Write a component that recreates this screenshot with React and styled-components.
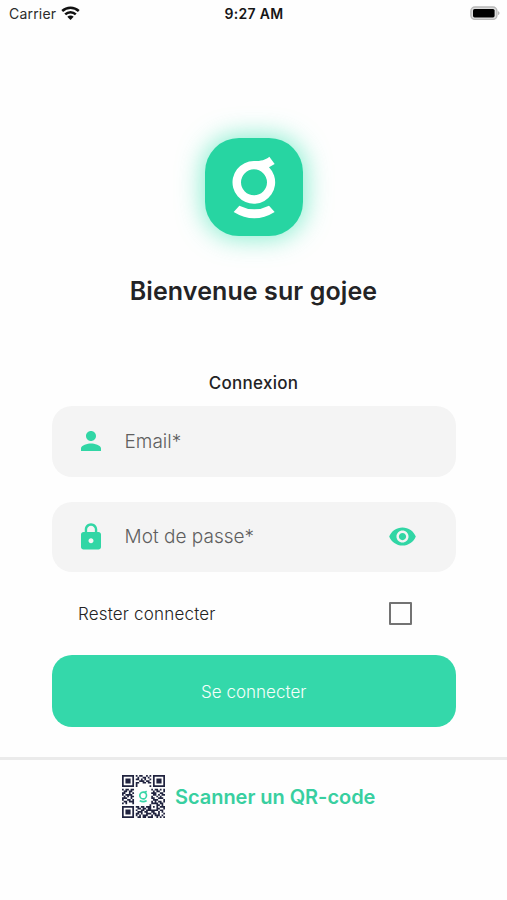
import React, { useState } from "react";
import styled, { createGlobalStyle } from "styled-components";

const GlobalStyle = createGlobalStyle`
  * { box-sizing: border-box; }
  body { margin: 0; background: #fefefe; font-family: Inter, "Liberation Sans", sans-serif; }
`;

const Screen = styled.main`
  width: 507px;
  height: 900px;
  overflow: hidden;
  display: flex;
  flex-direction: column;
  background: #fefefe;
  color: #232325;
`;

const StatusBar = styled.header`
  display: grid;
  grid-template-columns: 1fr auto 1fr;
  align-items: center;
  height: 27px;
  padding: 0 7px 0 9px;
  flex: none;
`;

const Carrier = styled.div`
  display: flex;
  align-items: center;
  gap: 5px;
  font-size: 14px;
  letter-spacing: 0.2px;
  color: #2c2c2c;
`;

const Clock = styled.div`
  font-size: 14px;
  font-weight: 600;
  letter-spacing: 0.3px;
  margin-right: 1px;
  color: #161616;
`;

const BatterySlot = styled.div`
  display: flex;
  justify-content: flex-end;
`;

const Tile = styled.div`
  width: 98px;
  height: 98px;
  margin: 111px 0 0 205px;
  flex: none;
  border-radius: 34px;
  background: #27d5a2;
  box-shadow: 0 0 24px 3px rgba(60, 228, 178, 0.6);
  svg { display: block; }
`;

const Title = styled.h1`
  margin: 37px 0 0;
  height: 36px;
  line-height: 36px;
  text-align: center;
  font-size: 25px;
  font-weight: 600;
  letter-spacing: ${(p) => p.$track}px;
`;

const Subtitle = styled.h2`
  margin: 62px 0 0;
  height: 24px;
  line-height: 24px;
  text-align: center;
  font-size: 17px;
  font-weight: 500;
  letter-spacing: ${(p) => p.$track}px;
`;

const Form = styled.form`
  width: 404.5px;
  margin: 11px 0 0 51.5px;
  display: flex;
  flex-direction: column;
`;

const Field = styled.label`
  display: flex;
  align-items: center;
  height: 70.5px;
  margin-bottom: 25px;
  padding: 0 39.5px 0 24px;
  border-radius: 20px;
  background: #f4f4f4;
  color: #31d6a5;
`;

const Input = styled.input`
  flex: 1;
  min-width: 0;
  height: 40px;
  margin-left: 19px;
  padding: 0;
  border: 0;
  outline: 0;
  background: none;
  font: 300 19px Inter, sans-serif;
  letter-spacing: ${(p) => p.$track}px;
  color: #333;
  &::placeholder { color: #5f5f5f; opacity: 1; }
`;

const IconButton = styled.button`
  display: flex;
  padding: 0;
  border: 0;
  background: none;
  color: inherit;
`;

const Remember = styled.label`
  display: flex;
  align-items: center;
  justify-content: space-between;
  height: 57px;
  padding: 0 40.5px 0 26.5px;
  margin-top: -12px;
  font-size: 17px;
  font-weight: 300;
  letter-spacing: ${(p) => p.$track}px;
  color: #242424;
`;

const Checkbox = styled.input`
  appearance: none;
  width: 23px;
  height: 23px;
  margin: 0 4px 0 0;
  border: 2px solid #737373;
  border-radius: 1px;
  &:checked { background: #31d6a5; }
`;

const Submit = styled.button`
  height: 72px;
  margin-top: 13px;
  padding-top: 2px;
  border: 0;
  border-radius: 20px;
  background: #34d8aa;
  color: #f4fffb;
  font: 300 17px Inter, sans-serif;
  letter-spacing: ${(p) => p.$track}px;
`;

const Footer = styled.footer`
  margin-top: 30px;
  padding: 15px 0 0 122px;
  border-top: 3px solid #ebebeb;
  display: flex;
  align-items: center;
  gap: 10px;
`;

const ScanLink = styled.span`
  padding-top: 1px;
  font-size: 20px;
  font-weight: 600;
  letter-spacing: ${(p) => p.$track}px;
  color: #38cfa0;
  white-space: nowrap;
`;

function Wifi() {
  return (
    <svg width="19" height="15" viewBox="0 0 19 15" fill="none" stroke="#111" strokeWidth="2.5">
      <path d="M1.2 5C5.9.6 13.1.6 17.8 5M4.2 8.3c3-2.9 7.6-2.9 10.6 0" />
      <path d="M6.3 10.7c1.8-1.6 4.6-1.6 6.4 0l-3.2 3.2z" fill="#111" stroke="none" />
    </svg>
  );
}

function Battery() {
  return (
    <svg width="30" height="15" viewBox="0 0 30 15">
      <rect x=".9" y="1" width="26" height="12.4" rx="4" fill="#ddd" stroke="#b8b8b8" strokeWidth="1.4" />
      <rect x="3" y="3" width="21.6" height="8.4" rx="1.6" fill="#000" />
      <path d="M28 5.3c2 .5 2 3.3 0 3.8z" fill="#b5b5b5" />
    </svg>
  );
}

const GMark = ({ fill = "#fff" }) => (
  <g fill={fill}>
    <path fillRule="evenodd" d="M237 168c22 0 34-3 46-13l16 22-17 10a64 64 0 1 1-45-19zm0 25a39 39 0 1 0 0 78 39 39 0 0 0 0-78z" />
    <path d="M193 302q45 22 89 0l17 19q-61 38-123 0z" />
  </g>
);

const Logo = () => (
  <svg width="98" height="98" viewBox="90 99 294 294"><GMark /></svg>
);

const QR_ROWS = [
  "1111111010110010101111111",
  "1000001001001101001000001",
  "1011101011010100101011101",
  "1011101000111011001011101",
  "1011101011001101101011101",
  "1000001010000000001000001",
  "1111111010000000101111111",
  "0000000000000000000000000",
  "1011011000000000010110101",
  "0110110000000000001011001",
  "1100101000000000011100110",
  "1011110000000000001101011",
  "0101011000000000010010100",
  "1110010000000000011001110",
  "1001101000000000001110001",
  "0110111000000000010101101",
  "1010001000000000011110110",
  "0000000000000000100011010",
  "1111111011011011101010111",
  "1000001001101101100011001",
  "1011101010011011111110110",
  "1011101001110110011001010",
  "1011101011010011101101001",
  "1000001010101110010111010",
  "1111111001101101110010101",
];

function QrCode() {
  const d = QR_ROWS.flatMap((row, y) =>
    [...row].map((cell, x) => (cell === "1" ? `M${x} ${y}h1v1h-1z` : ""))
  ).join("");
  return (
    <svg width="43" height="43" viewBox="0 0 25 25">
      <path d={d} fill="#20233f" />
      <g transform="translate(3.3 3.1) scale(.038)"><GMark fill="#38d6a7" /></g>
    </svg>
  );
}

const Icon = ({ size = 28, d }) => (
  <svg width={size} height={size} viewBox="0 0 24 24" fill="currentColor"><path d={d} /></svg>
);

const PERSON = "M12 12c2.21 0 4-1.79 4-4s-1.79-4-4-4-4 1.79-4 4 1.79 4 4 4zm0 2c-2.67 0-8 1.34-8 4v2h16v-2c0-2.66-5.33-4-8-4z";
const LOCK = "M18 8h-1V6c0-2.76-2.24-5-5-5S7 3.24 7 6v2H6c-1.1 0-2 .9-2 2v10c0 1.1.9 2 2 2h12c1.1 0 2-.9 2-2V10c0-1.1-.9-2-2-2zm-6 9c-1.1 0-2-.9-2-2s.9-2 2-2 2 .9 2 2-.9 2-2 2zm3.1-9H8.9V6c0-1.71 1.39-3.1 3.1-3.1 1.71 0 3.1 1.39 3.1 3.1v2z";
const EYE = "M12 4.5C7 4.5 2.73 7.61 1 12c1.73 4.39 6 7.5 11 7.5s9.27-3.11 11-7.5c-1.73-4.39-6-7.5-11-7.5zM12 17c-2.76 0-5-2.24-5-5s2.24-5 5-5 5 2.24 5 5-2.24 5-5 5zm0-8c-1.66 0-3 1.34-3 3s1.34 3 3 3 3-1.34 3-3-1.34-3-3-3z";

export default function App() {
  const [visible, setVisible] = useState(false);
  return (
    <Screen>
      <GlobalStyle />
      <StatusBar>
        <Carrier>Carrier <Wifi /></Carrier>
        <Clock>9:27 AM</Clock>
        <BatterySlot><Battery /></BatterySlot>
      </StatusBar>
      <Tile><Logo /></Tile>
      <Title $track={0.1}>Bienvenue sur gojee</Title>
      <Subtitle $track={0.27}>Connexion</Subtitle>
      <Form onSubmit={(e) => e.preventDefault()}>
        <Field>
          <Icon size={30} d={PERSON} />
          <Input $track={0} placeholder="Email*" />
        </Field>
        <Field>
          <Icon size={30} d={LOCK} />
          <Input $track={0.02} type={visible ? "text" : "password"} placeholder="Mot de passe*" />
          <IconButton type="button" aria-label="Afficher" onClick={() => setVisible(!visible)}>
            <Icon size={29} d={EYE} />
          </IconButton>
        </Field>
        <Remember $track={0.18}>Rester connecter<Checkbox type="checkbox" /></Remember>
        <Submit $track={0.02}>Se connecter</Submit>
      </Form>
      <Footer>
        <QrCode />
        <ScanLink $track={-0.04}>Scanner un QR-code</ScanLink>
      </Footer>
    </Screen>
  );
}
